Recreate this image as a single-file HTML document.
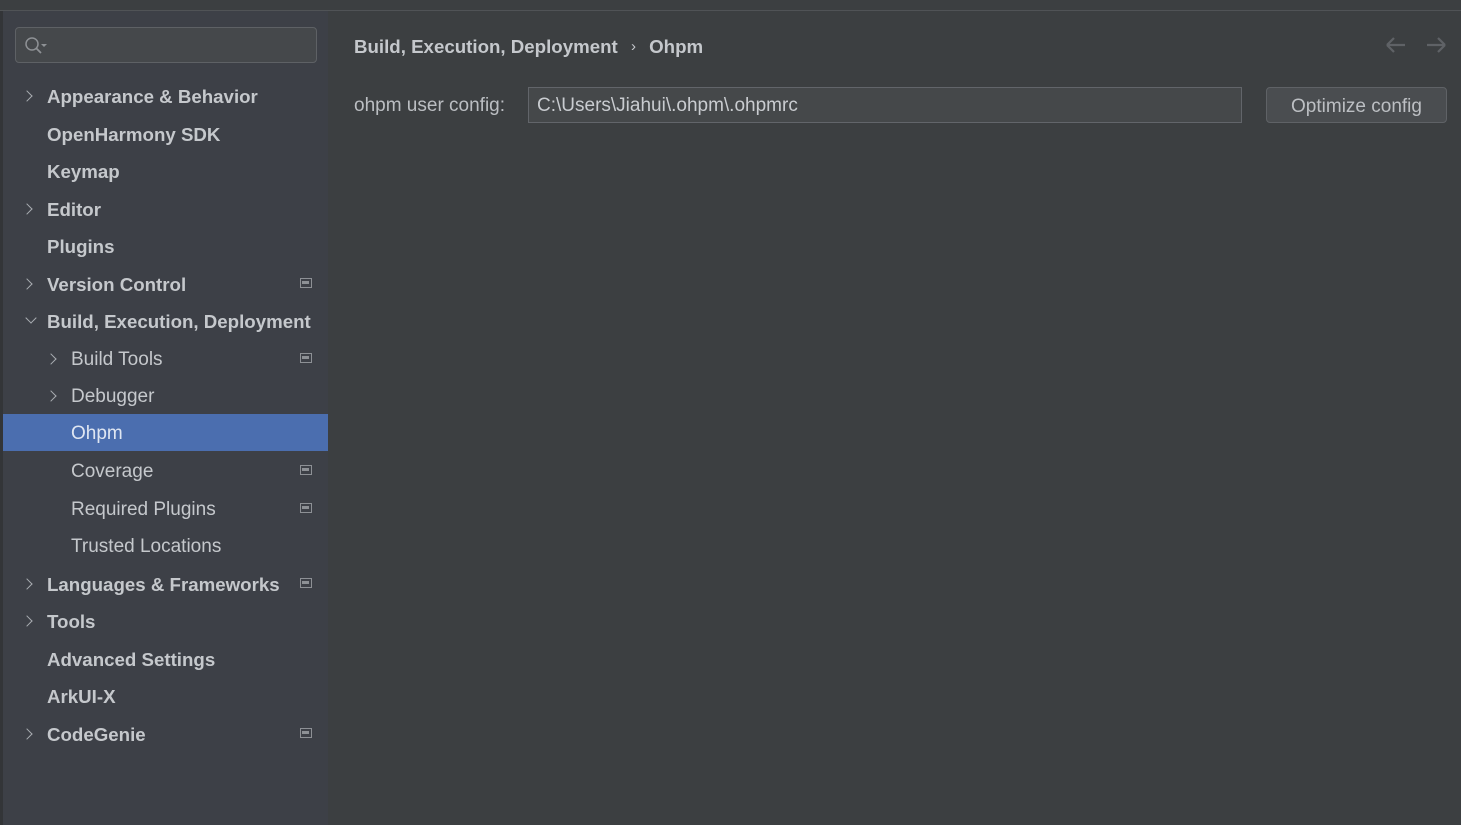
<!DOCTYPE html><html><head><style>
body{margin:0;width:1461px;height:825px;background:#3c3f41;font-family:"Liberation Sans",sans-serif;overflow:hidden;position:relative}
.top{position:absolute;left:0;top:0;width:1461px;height:10px;background:#3c3f41;border-bottom:1px solid #505356}
.side{position:absolute;left:3px;top:11px;width:325px;height:814px;background:#3d4047}
.lb{position:absolute;left:0;top:11px;width:3px;height:814px;background:#333538}
.search{position:absolute;left:15px;top:27px;width:302px;height:36px;border:1px solid #5e6165;border-radius:4px;background:#45484b;box-sizing:border-box}
.row{position:absolute;left:3px;width:325px;height:37px;line-height:39px;color:#c5c8cc;font-size:19px}
.b{font-weight:bold;font-size:18.7px}
.sel{background:#4b6eaf;color:#dfe6f2}
.ch{position:absolute;width:7px;height:7px;border-right:1.6px solid #a9adb2;border-bottom:1.6px solid #a9adb2}
.r{transform:rotate(-45deg)}.d{transform:rotate(45deg)}
.ic{position:absolute;left:297px;top:13px;width:12px;height:10px;border:1.5px solid #8d9095;box-sizing:border-box}
.ic:after{content:"";position:absolute;left:1px;top:2px;width:7px;height:3px;background:#8d9095}
</style></head><body>
<div class="top"></div><div class="lb"></div>
<div class="side"></div>
<div class="search"><svg width="34" height="34" style="position:absolute;left:6px;top:0"><circle cx="10" cy="16" r="6" fill="none" stroke="#8e9195" stroke-width="1.5"/><line x1="14" y1="20" x2="19" y2="25" stroke="#8e9195" stroke-width="1.8"/><path d="M19 16h6l-3 3z" fill="#8e9195"/></svg></div>

<div class="row b" style="top:77px"><span class="ch r" style="left:20px;top:15px"></span><span style="position:absolute;left:44px">Appearance &amp; Behavior</span></div>
<div class="row b" style="top:115px"><span style="position:absolute;left:44px">OpenHarmony SDK</span></div>
<div class="row b" style="top:152px"><span style="position:absolute;left:44px">Keymap</span></div>
<div class="row b" style="top:190px"><span class="ch r" style="left:20px;top:15px"></span><span style="position:absolute;left:44px">Editor</span></div>
<div class="row b" style="top:227px"><span style="position:absolute;left:44px">Plugins</span></div>
<div class="row b" style="top:265px"><span class="ch r" style="left:20px;top:15px"></span><span style="position:absolute;left:44px">Version Control</span><span class="ic"></span></div>
<div class="row b" style="top:302px"><span class="ch d" style="left:24px;top:12px"></span><span style="position:absolute;left:44px">Build, Execution, Deployment</span></div>
<div class="row" style="top:340px"><span class="ch r" style="left:44px;top:15px"></span><span style="position:absolute;left:68px">Build Tools</span><span class="ic"></span></div>
<div class="row" style="top:377px"><span class="ch r" style="left:44px;top:15px"></span><span style="position:absolute;left:68px">Debugger</span></div>
<div class="row sel" style="top:414px"><span style="position:absolute;left:68px">Ohpm</span></div>
<div class="row" style="top:452px"><span style="position:absolute;left:68px">Coverage</span><span class="ic"></span></div>
<div class="row" style="top:490px"><span style="position:absolute;left:68px">Required Plugins</span><span class="ic"></span></div>
<div class="row" style="top:527px"><span style="position:absolute;left:68px">Trusted Locations</span></div>
<div class="row b" style="top:565px"><span class="ch r" style="left:20px;top:15px"></span><span style="position:absolute;left:44px">Languages &amp; Frameworks</span><span class="ic"></span></div>
<div class="row b" style="top:602px"><span class="ch r" style="left:20px;top:15px"></span><span style="position:absolute;left:44px">Tools</span></div>
<div class="row b" style="top:640px"><span style="position:absolute;left:44px">Advanced Settings</span></div>
<div class="row b" style="top:677px"><span style="position:absolute;left:44px">ArkUI-X</span></div>
<div class="row b" style="top:715px"><span class="ch r" style="left:20px;top:15px"></span><span style="position:absolute;left:44px">CodeGenie</span><span class="ic"></span></div>

<div style="position:absolute;left:354px;top:36px;font-size:18.7px;font-weight:bold;color:#c5c8cc">Build, Execution, Deployment <span style="font-weight:normal;margin:0 8px;font-size:15px;position:relative;top:-2px">›</span> Ohpm</div>
<svg width="70" height="20" style="position:absolute;left:1385px;top:35px"><path d="M2 10h18M2 10l7-7M2 10l7 7" stroke="#5f6266" stroke-width="2.2" fill="none"/><path d="M60 10h-18M60 10l-7-7M60 10l-7 7" stroke="#5f6266" stroke-width="2.2" fill="none"/></svg>
<div style="position:absolute;left:354px;top:95px;font-size:19px;color:#bbbec2">ohpm user config:</div>
<div style="position:absolute;left:528px;top:87px;width:714px;height:36px;box-sizing:border-box;border:1px solid #62656a;background:#45484a;color:#c9ccd0;font-size:19px;line-height:35px;padding-left:8px">C:\Users\Jiahui\.ohpm\.ohpmrc</div>
<div style="position:absolute;left:1266px;top:87px;width:181px;height:36px;box-sizing:border-box;border:1px solid #5f6266;border-radius:4px;background:#4a4d50;color:#bcbfc3;font-size:19px;line-height:37px;text-align:center">Optimize config</div>
</body></html>
